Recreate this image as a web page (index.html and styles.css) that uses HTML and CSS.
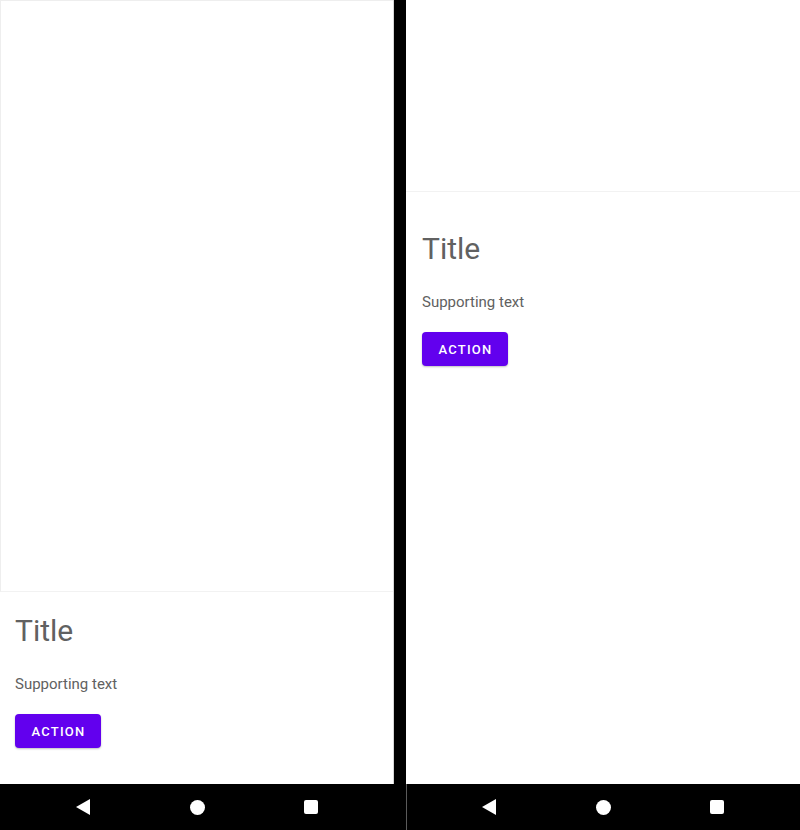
FILE: index.html
```html
<!DOCTYPE html>
<html>
<head>
<meta charset="utf-8">
<link rel="stylesheet" href="styles.css">
</head>
<body>
<div class="stage">
  <div class="device device-left">
    <div class="screen screen-left">
      <div class="media media-left"></div>
      <div class="card-content content-left">
        <h1 class="title">Title</h1>
        <p class="support">Supporting text</p>
        <button class="action">ACTION</button>
      </div>
    </div>
    <nav class="navbar navbar-left">
      <span class="nav-cell"><svg class="nav-icon" width="14" height="16" viewBox="0 0 14 16"><polygon points="14,0 14,16 0,8" fill="#fff"/></svg></span>
      <span class="nav-cell"><span class="home"></span></span>
      <span class="nav-cell"><span class="recents"></span></span>
    </nav>
  </div>
  <div class="device device-right">
    <div class="screen screen-right">
      <div class="media media-right"></div>
      <div class="card-content content-right">
        <h1 class="title">Title</h1>
        <p class="support">Supporting text</p>
        <button class="action">ACTION</button>
      </div>
    </div>
    <nav class="navbar navbar-right">
      <span class="nav-cell"><svg class="nav-icon" width="14" height="16" viewBox="0 0 14 16"><polygon points="14,0 14,16 0,8" fill="#fff"/></svg></span>
      <span class="nav-cell"><span class="home"></span></span>
      <span class="nav-cell"><span class="recents"></span></span>
    </nav>
  </div>
</div>
</body>
</html>
```

FILE: styles.css
```css
* { box-sizing: border-box; }
html, body {
  margin: 0;
  padding: 0;
  background: #000;
}
.stage {
  display: flex;
  width: 800px;
  height: 830px;
  background: #000;
  font-family: Roboto, "Noto Sans", sans-serif;
}
.device {
  display: flex;
  flex-direction: column;
  height: 830px;
}
.device-left { width: 406px; }
.device-right { width: 394px; }

.screen {
  height: 784px;
  background: #fff;
  display: flex;
  flex-direction: column;
}
.screen-left {
  width: 394px;
  border-right: 1px solid #d6d6d6;
}
.screen-right {
  width: 394px;
}
.media-left {
  height: 592px;
  flex: none;
  border-top: 1px solid #eeeeee;
  border-left: 1px solid #eeeeee;
  border-bottom: 1px solid #f2f2f2;
}
.media-right {
  height: 192px;
  flex: none;
  border-bottom: 1px solid #f2f2f2;
}
.card-content {
  padding-left: 15px;
}
.content-left { padding-top: 21px; }
.content-right { padding-top: 39px; }
.content-right { padding-left: 16px; }

.title {
  margin: 0;
  font-size: 30px;
  line-height: 36px;
  font-weight: 400;
  color: #616161;
}
.support {
  margin: 25px 0 0 0;
  font-size: 15px;
  line-height: 20px;
  color: #616161;
}
.action {
  margin-top: 20px;
  display: block;
  width: 86px;
  height: 34px;
  padding: 0 0 0 1px;
  border: none;
  border-radius: 4px;
  background: #6200ee;
  color: #fff;
  font-family: Roboto, "Noto Sans", sans-serif;
  font-size: 13px;
  font-weight: 500;
  letter-spacing: 1.25px;
  box-shadow: 0 1px 2px rgba(0, 0, 0, 0.25);
}

.navbar {
  height: 46px;
  background: #000;
  display: flex;
  align-items: center;
}
.navbar-left {
  width: 406px;
  padding-left: 26px;
}
.navbar-right {
  width: 394px;
  border-left: 1px solid #5a5a5a;
  padding-left: 25px;
}
.nav-cell {
  width: 114px;
  display: flex;
  justify-content: center;
  align-items: center;
}
.nav-icon { display: block; }
.home {
  width: 15px;
  height: 15px;
  border-radius: 50%;
  background: #fff;
}
.recents {
  width: 14px;
  height: 14px;
  border-radius: 2px;
  background: #fff;
}
```
